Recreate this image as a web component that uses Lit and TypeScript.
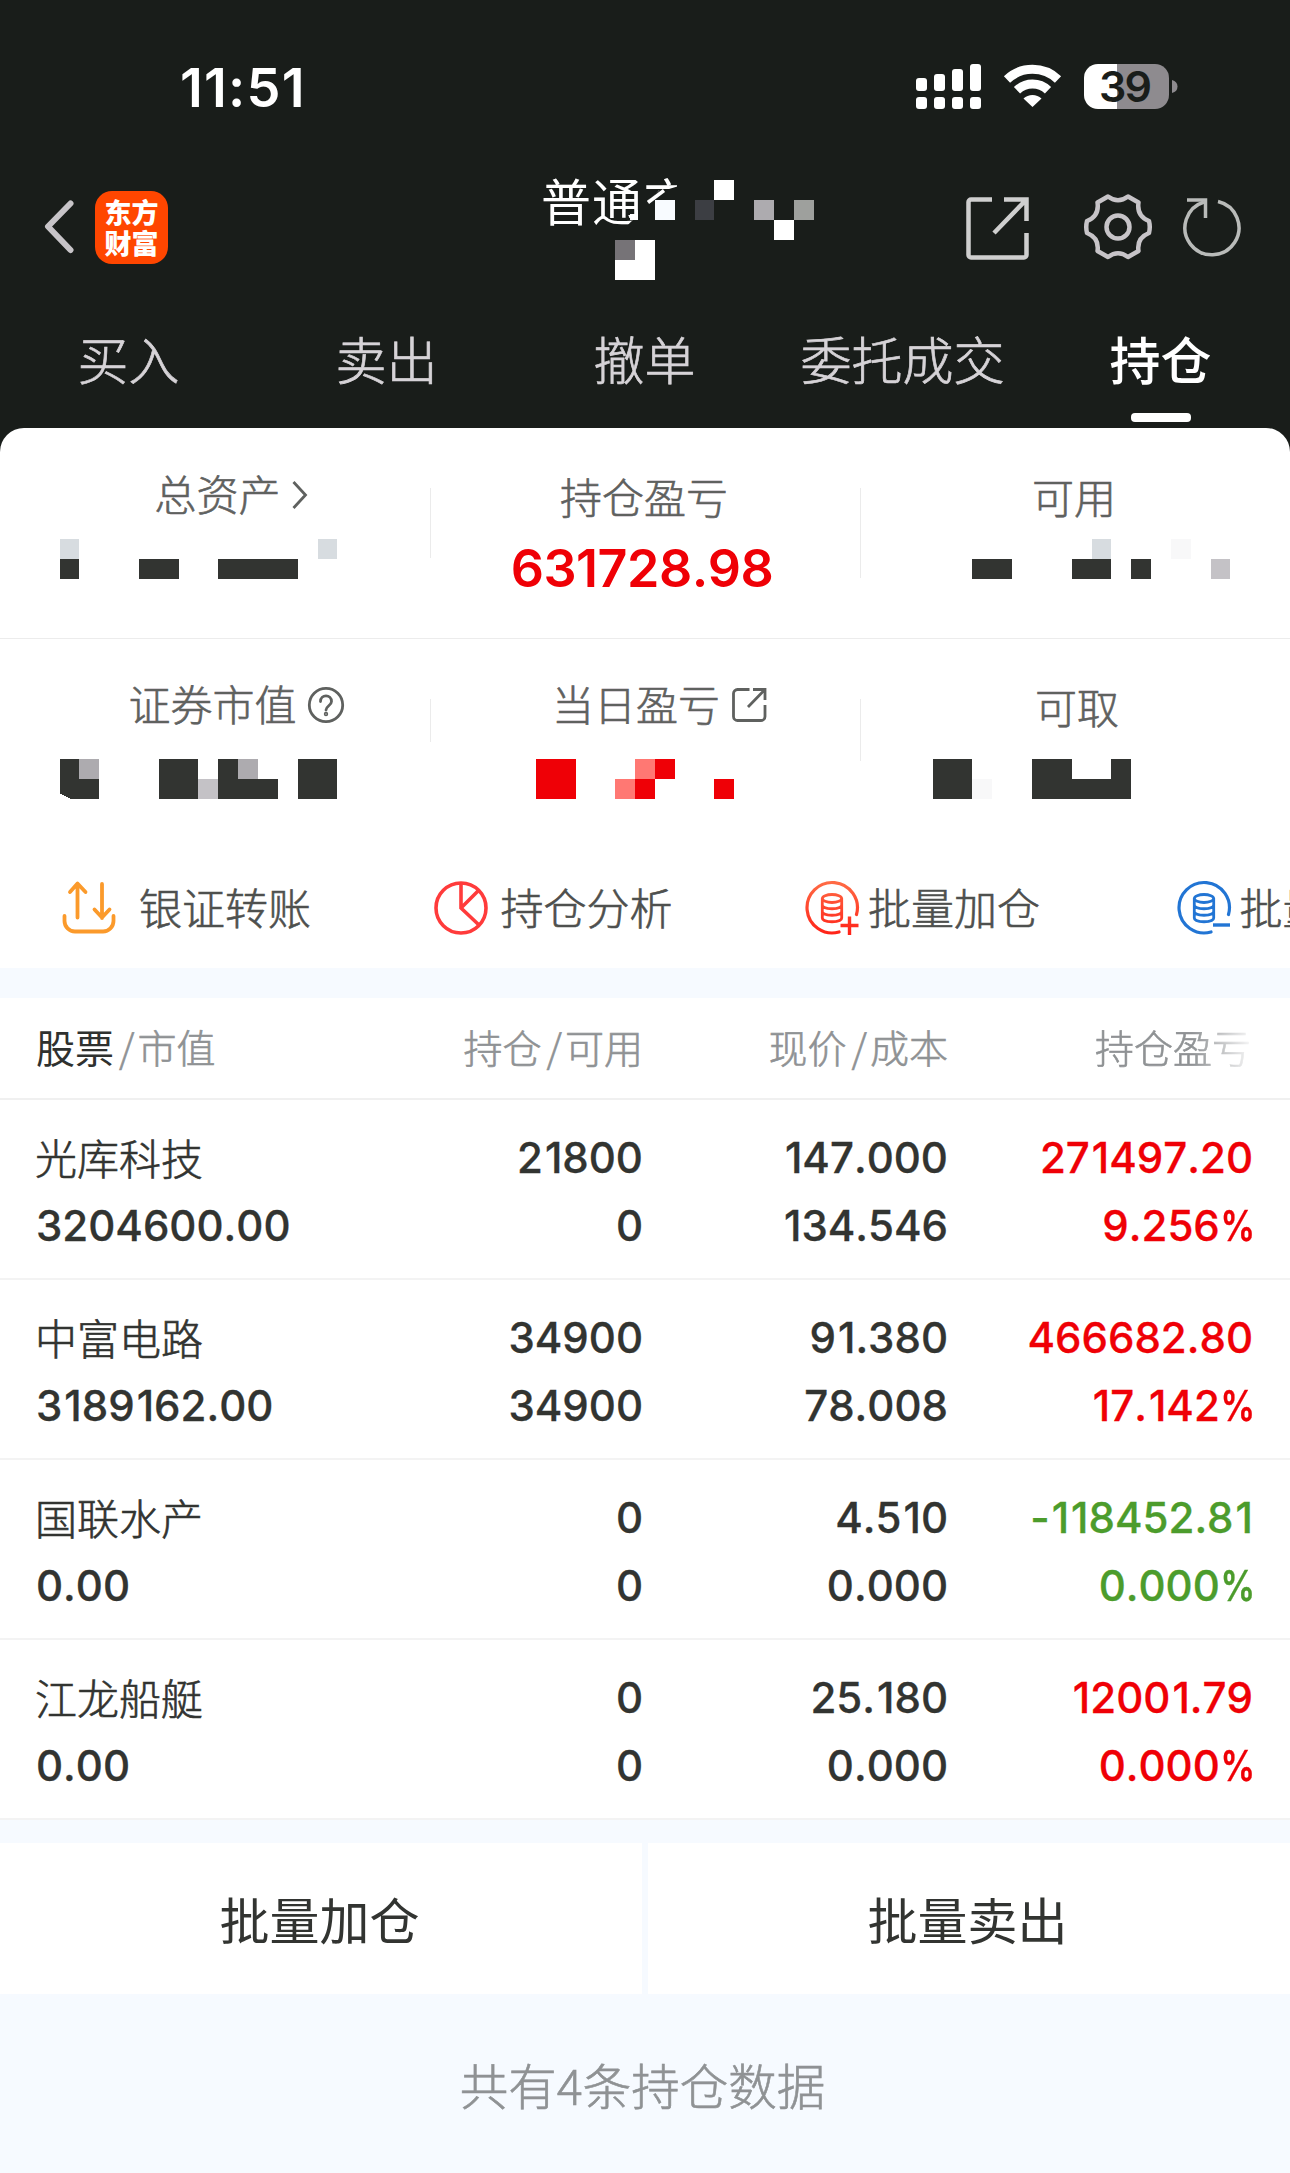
import { LitElement, html, css, svg } from "lit";
import { customElement, property } from "lit/decorators.js";
import { classMap } from "lit/directives/class-map.js";

type Block = [x: number, y: number, w: number, h: number, fill: string];

const DARK = "#323431";
const GREY = "#adabaf";
const PALE = "#c4c2c6";
const MIST = "#d7dce0";
const FAINT = "#f8f8f9";
const RED = "#ef0006";
const PINK = "#ff7873";

// Censored values, each drawn in a 430x40 strip that fills its column.
const masks: Record<string, Block[]> = {
  total: [
    [60, 0, 19, 20, MIST], [60, 20, 19, 20, DARK], [139, 20, 40, 20, DARK],
    [218, 20, 80, 20, DARK], [318, 0, 19, 20, MIST],
  ],
  available: [
    [112, 20, 40, 20, DARK], [212, 20, 39, 20, DARK], [232, 0, 19, 20, MIST],
    [271, 20, 20, 20, DARK], [311, 0, 20, 20, FAINT], [351, 20, 19, 20, PALE],
  ],
  market: [
    [60, 0, 19, 35, DARK], [79, 0, 20, 20, GREY], [62, 35, 20, 1, DARK], [64, 36, 20, 1, DARK],
    [66, 37, 20, 1, DARK], [68, 38, 20, 1, DARK], [70, 39, 20, 1, DARK], [79, 20, 20, 20, DARK],
    [159, 0, 39, 40, DARK], [198, 20, 20, 20, PALE], [218, 0, 20, 40, DARK],
    [238, 0, 20, 20, GREY], [238, 20, 40, 20, DARK], [298, 0, 39, 40, DARK],
  ],
  today: [
    [106, 0, 40, 40, RED], [185, 20, 20, 20, PINK], [205, 0, 20, 20, PINK],
    [205, 20, 20, 20, RED], [225, 0, 20, 20, RED], [284, 20, 20, 20, RED],
  ],
  cash: [
    [73, 0, 39, 40, DARK], [112, 20, 20, 20, FAINT], [172, 0, 40, 40, DARK],
    [212, 20, 39, 20, DARK], [251, 0, 20, 40, DARK],
  ],
};

const mask = (name: string) => html`<svg class="mask" viewBox="0 0 430 40" width="430" height="40" shape-rendering="crispEdges">
  ${masks[name].map(([x, y, w, h, f]) => svg`<rect x=${x} y=${y} width=${w} height=${h} fill=${f}></rect>`)}
</svg>`;

@customElement("status-bar")
class StatusBar extends LitElement {
  static styles = css`
    :host { display: flex; justify-content: space-between; height: 174px; box-sizing: border-box; padding: 60px 112px 0 180px; color: #fff; }
    .time { font: 600 54px/56px Inter, "Liberation Sans", sans-serif; font-kerning: none; letter-spacing: 1.2px; }
    .num { font: 600 43px Inter, "Liberation Sans", sans-serif; }
  `;
  render() {
    const bars = [[0, 14, 13], [18, 10, 17], [36, 5, 22], [54, 0, 27]];
    return html`
      <div class="time">11:51</div>
      <svg width="262" height="50" viewBox="0 0 262 50">
        <g fill="#fff">
          ${bars.map(([x, y, h]) => svg`<rect x=${x} y=${y + 4} width="11" height=${h} rx="3"></rect><rect x=${x} y="37" width="11" height="12" rx="3"></rect>`)}
        </g>
        <g fill="none" stroke="#fff" stroke-width="9">
          <path d="M91 19.5a37 37 0 0 1 51 0"></path>
          <path d="M101 30.3a22.5 22.5 0 0 1 31 0"></path>
        </g>
        <path d="M107.500 38.500a13 13 0 0 1 18 0l-9 8.500z" fill="#fff"></path>
        <clipPath id="cell"><rect x="168" y="4" width="85" height="45" rx="14"></rect></clipPath>
        <g clip-path="url(#cell)">
          <rect x="168" y="4" width="33" height="45" fill="#fff"></rect>
          <rect x="201" y="4" width="52" height="45" fill="#8e8b8f"></rect>
        </g>
        <path d="M256 20q5.500 1.500 5.500 6.500t-5.500 6.500z" fill="#8e8b8f"></path>
        <text class="num" x="209.500" y="41.500" text-anchor="middle" textLength="53" fill="#191d1a">39</text>
      </svg>
    `;
  }
}

@customElement("nav-bar")
class NavBar extends LitElement {
  static styles = css`
    :host { display: flex; height: 140px; align-items: flex-start; color: #fff; }
    .back { margin: 26px 0 0 44px; flex: none; }
    .logo { flex: none; box-sizing: border-box; width: 73px; height: 73px; margin: 17px 0 0 21px; padding-top: 5px; border-radius: 17px; background: #ff4600;
      font: 800 27px/31px "Noto Sans CJK SC", sans-serif; text-align: center; }
    .title { display: flex; position: relative; margin-left: 375px; width: 320px; height: 126px; }
    .name { margin: -4px 0 0 -2px; font: 400 50px/58px "Noto Sans CJK SC", sans-serif; letter-spacing: 1px; white-space: nowrap; }
    .cover { position: absolute; left: 0; top: 0; }
    .tool { flex: none; }
    .share { margin: 22px 0 0 102px; }
    .gear { margin: 19px 0 0 54px; }
    .reload { margin: 21px 0 0 30px; }
  `;
  render() {
    const cover: Block[] = [
      [134, 6, 40, 50, "#191d1a"], [112, 26, 62, 32, "#191d1a"],
      [112, 26, 20, 20, "#f8fbff"], [152, 26, 19, 20, "#3c3e43"], [171, 6, 20, 20, "#fff"],
      [211, 26, 20, 20, GREY], [231, 46, 20, 20, "#fff"], [251, 26, 20, 20, "#9ea09d"],
      [72, 66, 40, 40, "#fff"], [72, 66, 20, 20, "#767377"],
    ];
    return html`
      <svg class="back" width="30" height="54" viewBox="0 0 30 54"><path d="M26.500 3.500 4 26.500l22.500 23.500" fill="none" stroke="#c7c4c8" stroke-width="6" stroke-linecap="round" stroke-linejoin="round"></path></svg>
      <div class="logo">东方<br />财富</div>
      <div class="title">
        <span class="name">普通交</span>
        <svg class="cover" width="320" height="126" viewBox="0 0 320 126">
          <path d="M95 37v5q-8 6-13 12v6h40V29h-18v-3h-8z" fill="#191d1a"></path>
          <path d="M87 46v-6h5v-4h3v10z" fill="#fff"></path>
          <path d="M104 27l14-12h8l10-3v20h-32z" fill="#191d1a"></path>
          <path d="M105 28.500 121 16.500" stroke="#fff" stroke-width="3.500"></path>
          ${cover.map(([x, y, w, h, f]) => svg`<rect x=${x} y=${y} width=${w} height=${h} fill=${f}></rect>`)}
        </svg>
      </div>
      <svg class="tool share" width="65" height="65" viewBox="0 0 65 65" fill="none" stroke="#cfcfcf" stroke-width="4.500">
        <path d="M27 3.500H6a2.500 2.500 0 0 0-2.500 2.500v53A2.500 2.500 0 0 0 6 61.500h53a2.500 2.500 0 0 0 2.500-2.500V37"></path>
        <path d="M39 3.500h22.500V25M61 4 29 37"></path>
      </svg>
      <svg class="tool gear" width="68" height="68" viewBox="0 0 68 68" fill="none" stroke="#c7c4c8" stroke-width="4.500" stroke-linejoin="round">
        <path d="M24 3.500Q34 11 44 3.500L54.500 9.500Q52.500 23 65 28Q66.500 34 65 40Q52.500 45 54.500 58L44 64Q34 56.500 24 64L13.500 58Q15.500 45 3 40Q1.500 34 3 28Q15.500 23 13.500 9.500Z"></path>
        <circle cx="34" cy="34" r="11.500"></circle>
      </svg>
      <svg class="tool reload" width="60" height="64" viewBox="0 0 60 64" fill="none" stroke="#b9bbb9" stroke-width="3.500">
        <path d="M36 6.500A27 27 0 1 1 22 7"></path>
        <path d="M5 5h18.500v18"></path>
      </svg>
    `;
  }
}

@customElement("tab-strip")
class TabStrip extends LitElement {
  static styles = css`
    :host { display: grid; grid-template-columns: repeat(5, 1fr); height: 114px; box-sizing: border-box; padding-top: 9px; }
    .tab { display: flex; flex-direction: column; align-items: center; font: 300 51px/70px "Noto Sans CJK SC", sans-serif; color: #d6d3d7; white-space: nowrap; -webkit-text-stroke: 0.7px currentColor; text-indent: -1px; }
    .active { color: #fff; font-weight: 500; -webkit-text-stroke: 0; }
    .mark { width: 60px; height: 9px; border-radius: 4px; background: #fff; margin-top: 20px; }
  `;
  render() {
    const tabs = ["买入", "卖出", "撤单", "委托成交", "持仓"];
    return tabs.map((t, i) => html`<div class=${classMap({ tab: true, active: i === 4 })}>${t}${i === 4 ? html`<span class="mark"></span>` : ""}</div>`);
  }
}

@customElement("asset-summary")
class AssetSummary extends LitElement {
  static styles = css`
    :host { display: block; background: #fff; border-radius: 24px 24px 0 0; height: 540px; }
    .row { display: grid; grid-template-columns: repeat(3, 430px); height: 211px; box-sizing: border-box; border-bottom: 1px solid #ececec; }
    .row.second { height: 213px; border-bottom: none; }
    .cell { position: relative; display: flex; flex-direction: column; align-items: center; }
    .label { display: flex; align-items: center; height: 62px; margin: 37px 0 2px; font: 300 42px/62px "Noto Sans CJK SC", sans-serif; color: #5f615f; white-space: nowrap; -webkit-text-stroke: 0.6px currentColor; }
    .label.up { margin-top: 34px; margin-bottom: 5px; }
    .second .label { margin-top: 36px; margin-bottom: 2px; }
    .second .label.up { margin-top: 33px; margin-bottom: 5px; }
    .label svg { flex: none; margin-top: 3px; }
    .mask { display: block; margin-top: 10px; }
    .second .mask { margin-top: 20px; }
    .profit { font: 600 52px/62px Inter, "Liberation Sans", sans-serif; font-kerning: none; color: #ef0006; margin-top: 9px; letter-spacing: -0.5px; padding-right: 6px; }
    .rule { position: absolute; right: -1px; top: 60px; width: 1px; background: #ebebeb; }
    .h70 { height: 70px; } .h90 { height: 90px; } .h43 { height: 43px; } .h62 { height: 62px; }
    .chev { margin-left: 10px; } .q { margin-left: 10px; } .out { margin-left: 11px; }
    .l1 { padding-left: 33px; } .l2 { padding-left: 43px; } .l3 { padding-left: 29px; } .l4 { padding-left: 4px; }
    .l0 { padding-right: 2px; }
    .actions { display: flex; height: 111px; align-items: center; padding-left: 61px; overflow: hidden; }
    .action { flex: none; width: 371.500px; display: flex; align-items: center; font: 300 43px/62px "Noto Sans CJK SC", sans-serif; color: #4e504e; white-space: nowrap; -webkit-text-stroke: 0.6px currentColor; }
    .action span { margin-top: -3px; }
    .action svg { flex: none; margin-right: 8px; }
    .action.wide svg { margin-right: 22px; }
    .action.pie svg { margin-right: 12px; }
  `;
  render() {
    const coin = (color: string, sign: string) => svg`<g fill="none" stroke=${color}>
      <path d="M52.500 34.500A25.200 25.200 0 1 0 35 52" stroke-width="3.200" stroke-linecap="round"></path>
      <g stroke-width="2.800">
        <ellipse cx="28" cy="18.500" rx="9.700" ry="4"></ellipse>
        <path d="M18.300 18.500v19.500c0 5 19.400 5 19.400 0V18.500M18.300 25c0 5 19.400 5 19.400 0M18.300 31.500c0 5 19.400 5 19.400 0"></path>
      </g>
      <path d=${sign} stroke-width="3.400"></path>
    </g>`;
    return html`
      <div class="row">
        <div class="cell"><div class="label up l1">总资产
          <svg class="chev" width="18" height="32" viewBox="0 0 18 32"><path d="M2.500 3l12 13-12 13" fill="none" stroke="#5f615f" stroke-width="2.800"></path></svg></div>
          ${mask("total")}<i class="rule h70"></i></div>
        <div class="cell"><div class="label l0">持仓盈亏</div><div class="profit">631728.98</div><i class="rule h90"></i></div>
        <div class="cell"><div class="label l0">可用</div>${mask("available")}</div>
      </div>
      <div class="row second">
        <div class="cell"><div class="label up l2">证券市值
          <svg class="q" width="38" height="38" viewBox="0 0 38 38" fill="none" stroke="#5f615f" stroke-width="2.800"><circle cx="19" cy="19" r="16.700"></circle><path d="M13.500 15.500c0-7.500 11-7.500 11 0 0 4-5.500 4.500-5.500 8.500" stroke-linecap="round"></path><circle cx="19" cy="28" r="0.800"></circle></svg></div>
          ${mask("market")}<i class="rule h43"></i></div>
        <div class="cell"><div class="label up l3">当日盈亏
          <svg class="out" width="36" height="36" viewBox="0 0 36 36" fill="none" stroke="#5f615f" stroke-width="2.800"><path d="M18.500 2.500H6.500a4 4 0 0 0-4 4v23a4 4 0 0 0 4 4h23.500a4 4 0 0 0 4-4V18M22 2.500h12V13M34 2.500 17 20"></path></svg></div>
          ${mask("today")}<i class="rule h62"></i></div>
        <div class="cell"><div class="label l4">可取</div>${mask("cash")}</div>
      </div>
      <div class="actions">
        <div class="action wide"><svg width="56" height="56" viewBox="0 0 56 56" fill="none" stroke="#fb9a2b" stroke-width="3.800" stroke-linecap="round" stroke-linejoin="round"><path d="M16.500 37.500V4M9 12l7.500-8.500L24.500 12M41 4v34M33.500 29.500l7.500 8 7.500-8M3.500 36v5a10.500 10.500 0 0 0 10.500 10.500h28a10.500 10.500 0 0 0 10.500-10.500v-5"></path></svg><span>银证转账</span></div>
        <div class="action pie"><svg width="56" height="56" viewBox="0 0 56 56" fill="none" stroke="#ff3b3b" stroke-width="3.600"><circle cx="28" cy="28" r="25"></circle><path d="M28 3v25l18 17M28 28l17-17"></path></svg><span>持仓分析</span></div>
        <div class="action"><svg width="56" height="56" viewBox="0 0 56 56"><defs><linearGradient id="warm" gradientUnits="userSpaceOnUse" x1="0" y1="2" x2="0" y2="54"><stop offset="0" stop-color="#ff6b45"></stop><stop offset="1" stop-color="#ff2318"></stop></linearGradient></defs>${coin("url(#warm)", "M36.500 45.500h18M45.500 36.500V55")}</svg><span>批量加仓</span></div>
        <div class="action"><svg width="56" height="56" viewBox="0 0 56 56">${coin("#2275d4", "M37 45h17")}</svg><span>批量卖出</span></div>
      </div>
    `;
  }
}

interface Holding { name: string; value: string; qty: string; free: string; price: string; cost: string; profit: string; rate: string; down?: boolean }

const figure = (s: string) => s.split(/([1%])/).filter(Boolean).map((p) =>
  p === "1" ? html`<b class="one">1</b>` : p === "%" ? html`<b class="pct">%</b>` : p);

@customElement("holding-table")
class HoldingTable extends LitElement {
  @property({ attribute: false }) rows: Holding[] = [];
  static styles = css`
    :host { display: block; background: #fff; }
    .head, .row { display: grid; grid-template-columns: 307px 300px 305px 305px; padding: 0 37px 0 36px; box-sizing: border-box; }
    .head { height: 102px; align-items: center; border-bottom: 2px solid #f0f0f0; padding-bottom: 4px; font: 300 39px/58px "Noto Sans CJK SC", sans-serif; color: #8f9294; white-space: nowrap; -webkit-text-stroke: 0.6px currentColor; }
    .head span { text-align: right; }
    .head .first { text-align: left; }
    .head b { font-weight: 400; color: #2f312f; -webkit-text-stroke: 0; }
    .head i { font-style: normal; margin: 0 3px 0 5px; }
    .head .fade { padding-right: 2px; -webkit-mask-image: linear-gradient(90deg, #000 80%, transparent 101%); mask-image: linear-gradient(90deg, #000 80%, transparent 101%); }
    .row { height: 180px; border-bottom: 2px solid #f3f3f3; padding-top: 24px; grid-template-rows: 68px 68px; font: 500 42px/68px Inter, "Liberation Sans", sans-serif; font-kerning: none; color: #323431; -webkit-text-stroke: 0.3px currentColor; }
    .row span { text-align: right; white-space: nowrap; }
    .row .name { text-align: left; margin: -1px 0 0 -1px; font: 300 42px/68px "Noto Sans CJK SC", sans-serif; -webkit-text-stroke: 0.6px currentColor; }
    .row .value { text-align: left; }
    .row .gain { color: #ef0006; }
    .row .loss { color: #4c9c2c; }
    .one { font-weight: inherit; padding-left: 2px; }
    .pct { font-weight: 600; display: inline-block; transform: scaleX(0.82); transform-origin: right; margin: 0 -2px 0 -7px; }
  `;
  render() {
    return html`
      <div class="head">
        <span class="first"><b>股票</b><i>/</i>市值</span>
        <span>持仓<i>/</i>可用</span><span>现价<i>/</i>成本</span><span class="fade">持仓盈亏</span>
      </div>
      ${this.rows.map((r) => {
        const c = classMap({ gain: !r.down, loss: !!r.down });
        return html`<div class="row">
          <span class="name">${r.name}</span><span>${figure(r.qty)}</span><span>${figure(r.price)}</span><span class=${c}>${figure(r.profit)}</span>
          <span class="value">${figure(r.value)}</span><span>${figure(r.free)}</span><span>${figure(r.cost)}</span><span class=${c}>${figure(r.rate)}</span>
        </div>`;
      })}
    `;
  }
}

@customElement("app-root")
class AppRoot extends LitElement {
  static styles = css`
    :host { display: block; width: 1290px; height: 2173px; overflow: hidden; background: #f6faff; }
    .top { background: #191d1a; height: 428px; }
    .sheet { background: #191d1a; }
    holding-table { margin-top: 30px; }
    .buttons { display: grid; grid-template-columns: 642px 642px; gap: 6px; margin-top: 23px; }
    .button { background: #fff; height: 151px; font: 400 50px/150px "Noto Sans CJK SC", sans-serif; color: #323431; text-align: center; text-indent: -3px; }
    .count { margin-top: 57px; text-align: center; text-indent: -5px; font: 300 48.500px/66px "Noto Sans CJK SC", sans-serif; color: #8f9294; -webkit-text-stroke: 0.6px currentColor; }
  `;
  private rows: Holding[] = [
    { name: "光库科技", value: "3204600.00", qty: "21800", free: "0", price: "147.000", cost: "134.546", profit: "271497.20", rate: "9.256%" },
    { name: "中富电路", value: "3189162.00", qty: "34900", free: "34900", price: "91.380", cost: "78.008", profit: "466682.80", rate: "17.142%" },
    { name: "国联水产", value: "0.00", qty: "0", free: "0", price: "4.510", cost: "0.000", profit: "-118452.81", rate: "0.000%", down: true },
    { name: "江龙船艇", value: "0.00", qty: "0", free: "0", price: "25.180", cost: "0.000", profit: "12001.79", rate: "0.000%" },
  ];
  render() {
    return html`
      <div class="top"><status-bar></status-bar><nav-bar></nav-bar><tab-strip></tab-strip></div>
      <div class="sheet"><asset-summary></asset-summary></div>
      <holding-table .rows=${this.rows}></holding-table>
      <div class="buttons"><div class="button">批量加仓</div><div class="button">批量卖出</div></div>
      <div class="count">共有4条持仓数据</div>
    `;
  }
}
